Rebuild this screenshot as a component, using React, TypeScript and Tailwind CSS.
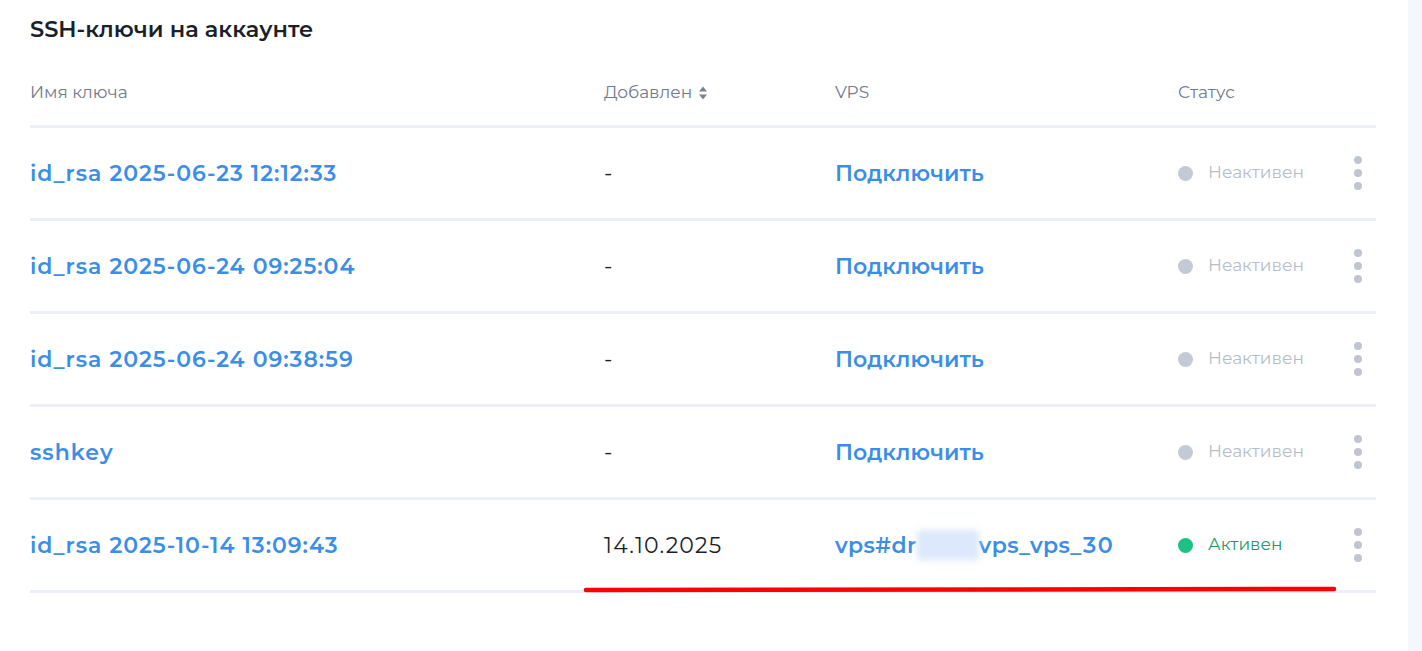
type Row = {
    name: string;
    added: string;
    vps?: boolean;
    active?: boolean;
};

const rows: Row[] = [
    { name: 'id_rsa 2025-06-23 12:12:33', added: '-' },
    { name: 'id_rsa 2025-06-24 09:25:04', added: '-' },
    { name: 'id_rsa 2025-06-24 09:38:59', added: '-' },
    { name: 'sshkey', added: '-' },
    { name: 'id_rsa 2025-10-14 13:09:43', added: '14.10.2025', vps: true, active: true },
];

const font = { fontFamily: 'Montserrat, Inter, "Noto Sans", sans-serif' };

function Kebab() {
    return (
        <div className="flex flex-col items-center gap-[5px]">
            <span className="w-[8px] h-[8px] rounded-full bg-[#bfc5d1]" />
            <span className="w-[8px] h-[8px] rounded-full bg-[#bfc5d1]" />
            <span className="w-[8px] h-[8px] rounded-full bg-[#bfc5d1]" />
        </div>
    );
}

function SortIcon() {
    return (
        <svg width="10" height="16" viewBox="0 0 10 16" className="text-[#7b8290]">
            <path d="M5 1.5 L9 6.5 H1 Z" fill="currentColor" />
            <path d="M5 14.5 L9 9.5 H1 Z" fill="currentColor" />
        </svg>
    );
}

export default function App() {
    return (
        <div className="flex w-[1422px] h-[651px] bg-white" style={font}>
            <div className="relative w-[1408px] pl-[30px] pr-[32px]">
                <div className="h-[60px] flex items-center">
                    <h2 className="text-[22.5px] font-semibold text-[#1b1e2b]">SSH-ключи на аккаунте</h2>
                </div>

                <div className="grid grid-cols-[574px_231px_343px_1fr_36px] h-[68px] items-center text-[17px] text-[#707a8c] border-b-[3px] border-[#eceff7]">
                    <span>Имя ключа</span>
                    <span className="flex items-center gap-[6px]">
                        Добавлен
                        <SortIcon />
                    </span>
                    <span>VPS</span>
                    <span>Статус</span>
                    <span />
                </div>

                {rows.map((row, i) => (
                    <div
                        key={i}
                        className="grid grid-cols-[574px_231px_343px_1fr_36px] h-[93px] items-center border-b-[3px] border-[#eceff7]"
                    >
                        <span className="text-[22px] font-semibold text-[#3a8ee8] tracking-[1px]">{row.name}</span>
                        <span className="text-[22px] text-[#1b1e2b] tracking-[1.2px]">{row.added}</span>
                        {row.vps ? (
                            <span className="text-[22px] font-semibold text-[#3a8ee8] tabular-nums tracking-[0.4px] flex items-center">
                                vps#dr
                                <span className="inline-block w-[62px] h-[30px] bg-[#dce8fb] blur-[3px]" />
                                vps_vps_30
                            </span>
                        ) : (
                            <span className="text-[22px] font-semibold text-[#3a8ee8] tracking-[0.1px]">Подключить</span>
                        )}
                        {row.active ? (
                            <span className="flex items-center gap-[15px] text-[17px] text-[#179b69]">
                                <span className="w-[15px] h-[15px] rounded-full bg-[#1cc184]" />
                                Активен
                            </span>
                        ) : (
                            <span className="flex items-center gap-[15px] text-[17px] text-[#b5bdc9]">
                                <span className="w-[15px] h-[15px] rounded-full bg-[#c3cad5]" />
                                Неактивен
                            </span>
                        )}
                        <div className="flex justify-center">
                            <Kebab />
                        </div>
                    </div>
                ))}

                <svg className="absolute left-[582px] top-[583px]" width="758" height="14" viewBox="0 0 758 14">
                    <path d="M4 7 Q 380 5 752 6" stroke="#ff0000" strokeWidth="4.5" strokeLinecap="round" fill="none" />
                </svg>
            </div>
            <div className="flex-1 bg-[#f4f7fb]" />
        </div>
    );
}
